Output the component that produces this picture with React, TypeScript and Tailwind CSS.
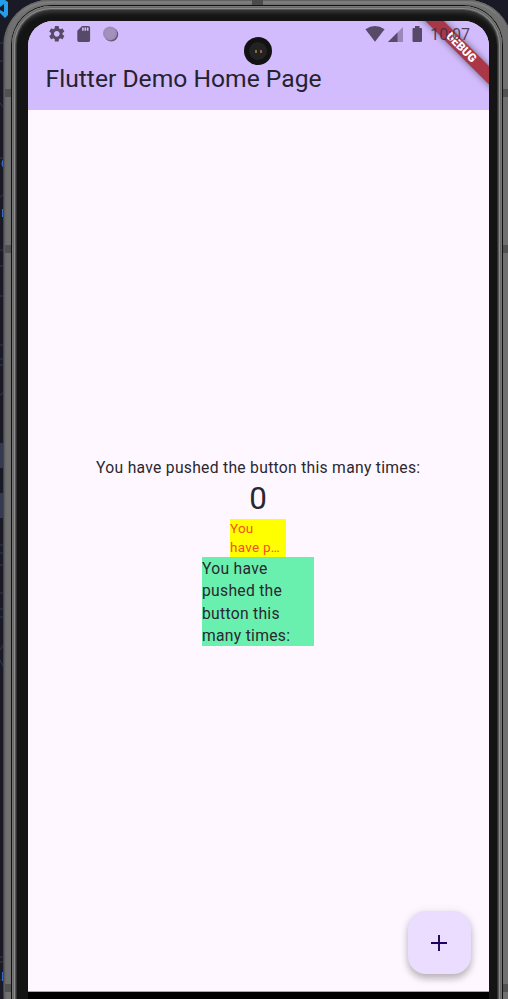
import React from "react";

function StatusIcons() {
  return (
    <svg className="absolute left-0 top-0" width="461" height="40" viewBox="28 21 461 40">
      <g fill="#574a68">
        <path transform="translate(47.2 24.2) scale(.8)" d="M19.14 12.94c.04-.3.06-.61.06-.94 0-.32-.02-.64-.07-.94l2.03-1.58c.18-.14.23-.41.12-.61l-1.92-3.32c-.12-.22-.37-.29-.59-.22l-2.39.96c-.5-.38-1.03-.7-1.62-.94l-.36-2.54c-.04-.24-.24-.41-.48-.41h-3.84c-.24 0-.43.17-.47.41l-.36 2.54c-.59.24-1.13.57-1.62.94l-2.39-.96c-.22-.08-.47 0-.59.22L2.74 8.87c-.12.21-.08.47.12.61l2.03 1.58c-.05.3-.09.63-.09.94s.02.64.07.94l-2.03 1.58c-.18.14-.23.41-.12.61l1.92 3.32c.12.22.37.29.59.22l2.39-.96c.5.38 1.03.7 1.62.94l.36 2.54c.05.24.24.41.48.41h3.84c.24 0 .44-.17.47-.41l.36-2.54c.59-.24 1.13-.56 1.62-.94l2.39.96c.22.08.47 0 .59-.22l1.92-3.32c.12-.22.07-.47-.12-.61l-2.01-1.58zM12 15.6c-1.98 0-3.6-1.62-3.6-3.6s1.62-3.6 3.6-3.6 3.6 1.62 3.6 3.6-1.62 3.6-3.6 3.6z" />
        <path transform="translate(74.1 24.3) scale(.8)" d="M18 2h-8L4.02 8 4 20c0 1.1.9 2 2 2h12c1.1 0 2-.9 2-2V4c0-1.1-.9-2-2-2zm-6 6h-2V4h2v4zm3 0h-2V4h2v4zm3 0h-2V4h2v4z" />
        <path d="M365.4 29.2Q375 22.7 384.6 29.2L375 41.7Z" />
        <path opacity=".45" d="M403 27V42H388Z" />
        <path d="M397.5 32.5V42H388Z" />
        <path d="M415 26h4.5v2h1.5q1 0 1 1v12q0 1-1 1h-7.5q-1 0-1-1V29q0-1 1-1H415Z" />
      </g>
      <circle cx="111.2" cy="34.5" r="7" fill="#675776" />
      <circle cx="110" cy="33.4" r="7" fill="#a391bd" />
      <circle cx="110" cy="33.4" r="5.8" fill="none" stroke="#8f7da8" strokeWidth=".8" strokeDasharray="1 1" />
    </svg>
  );
}

function DebugBanner() {
  return (
    <div className="absolute right-0 top-0 h-[72px] w-[72px] overflow-hidden">
      <div className="absolute left-[-19px] top-[19.8px] flex h-[13.4px] w-[126px] rotate-45 items-center justify-center bg-[#a93747] text-[11.6px] font-black leading-none text-white shadow-[0_0_7px_rgba(0,0,0,0.5)]">
        DEBUG
      </div>
    </div>
  );
}

function CodeSliver() {
  return (
    <svg className="absolute left-0 top-0" width="508" height="999">
      <g fill="none" stroke="#35374a">
        <path d="M0 43H4M0 61H4M0 103L4 108M0 158H4M0 197L4 194M0 250H4M0 266H4M0 296H4M0 345H4M0 359H4M0 365H4M0 395L4 392M0 545H4M0 553H4M0 565H4M0 593H4M0 609H4M0 617H4M0 650L4 644M0 660L4 668M0 957H4M0 962H4M0 980H4" />
      </g>
      <path d="M0 443H4V468H0ZM0 493H4V518H0Z" fill="#353950" />
      <path d="M4 158Q-1 164 4 169ZM2 209H4V217H2ZM2 972H4V981H2Z" fill="#3569c5" />
      <path d="M0 0H5L8 2V15L5 18L0 13V10L4 12V4L0 7Z" fill="#249eea" />
    </svg>
  );
}

function Seams() {
  return (
    <div className="flex w-[6px] flex-col pt-[89px]">
      <i className="h-2 bg-[#525252]" />
      <i className="mt-[148px] h-2 bg-[#525252]" />
      <i className="mt-[731px] h-2 bg-[#525252]" />
    </div>
  );
}

function PhoneScreen() {
  return (
    <div className="relative flex h-[971px] w-[461px] flex-col overflow-hidden rounded-t-[25px] border-b border-[#aaa6ad] bg-[#fef7ff]">
      <header className="relative h-[89px] shrink-0 bg-[#d2bcfd] pl-[17.6px] pt-[42px]">
        <h1 className="whitespace-nowrap text-[24.65px] font-normal leading-[32px] text-[#27222f]">Flutter Demo Home Page</h1>
        <StatusIcons />
        <DebugBanner />
        <span className="absolute right-[19px] top-[4px] text-[16px] leading-[20px] text-[#3b2b40]/85">10:07</span>
        <div className="absolute left-[216px] top-[16px] flex h-7 w-7 items-center justify-center rounded-full bg-[#121212]">
          <div className="flex h-[18px] w-[18px] items-center justify-center gap-[3px] rounded-full bg-[#222]">
            <i className="h-[3px] w-[2px] bg-[#787145]" />
            <i className="h-[3px] w-[2px] bg-[#95604e]" />
          </div>
        </div>
      </header>
      <main className="flex flex-col items-center pr-px pt-[346.6px] text-[15.7px] leading-[22.35px] tracking-[0.28px] text-[#2b2730]">
        <p className="whitespace-nowrap pl-[0.5px]">You have pushed the button this many times:</p>
        <p className="h-[39.7px] text-[31.4px] leading-[39.7px] tracking-normal">0</p>
        <p className="h-[38px] w-[56px] bg-[#ffff00] text-[13.45px] leading-[19.1px] text-[#f4511e]">You<br />have p…</p>
        <p className="h-[89.4px] w-[112px] bg-[#69f0ae] pt-[1.2px]">You have<br />pushed the<br />button this<br />many times:</p>
      </main>
      <button className="absolute bottom-[17px] right-[18px] flex h-[63px] w-[63px] items-center justify-center rounded-[18px] bg-[#eaddff] pr-px shadow-[0_5px_7px_rgba(0,0,0,0.22),0_1px_10px_rgba(0,0,0,0.1)]">
        <svg width="16" height="16" viewBox="0 0 16 16" stroke="#21005d" strokeWidth="1.9"><path d="M8 0V16M0 8H16" /></svg>
      </button>
    </div>
  );
}

export default function App() {
  return (
    <div className="relative h-[999px] w-[508px] overflow-hidden bg-[#191a25] font-[Roboto,sans-serif]">
      <CodeSliver />
      <div className="relative ml-[3px] h-[1040px] w-[510px] rounded-[46px] bg-[#444] pl-px">
        <div className="h-[1040px] w-[508px] rounded-[45px] bg-[#707070] pl-[7px] pt-[5px] shadow-[inset_0_0_2px_1px_#555,inset_0_3px_2px_#8a8a8a]">
          <div className="h-[1040px] w-[492px] rounded-[40px] bg-[#111] pl-px pt-px">
            <div className="h-[1040px] w-[490px] rounded-[39px] bg-[#141414] pl-[16px] pt-[15px] shadow-[inset_0_0_0_1px_#777,inset_0_0_0_2px_#666,inset_0_0_0_3px_#8c8c8c,inset_0_0_0_4px_#555,inset_0_0_0_5px_#333,inset_0_6px_5px_#444]">
              <div className="h-[1000px] w-[461px] rounded-t-[25px] bg-black">
                <PhoneScreen />
              </div>
            </div>
          </div>
        </div>
      </div>
      <div className="absolute inset-y-0 left-[5px] flex w-[504px] justify-between">
        <Seams />
        <i className="h-[5px] w-[11px] bg-[#4b4b4b]" />
        <Seams />
      </div>
    </div>
  );
}
